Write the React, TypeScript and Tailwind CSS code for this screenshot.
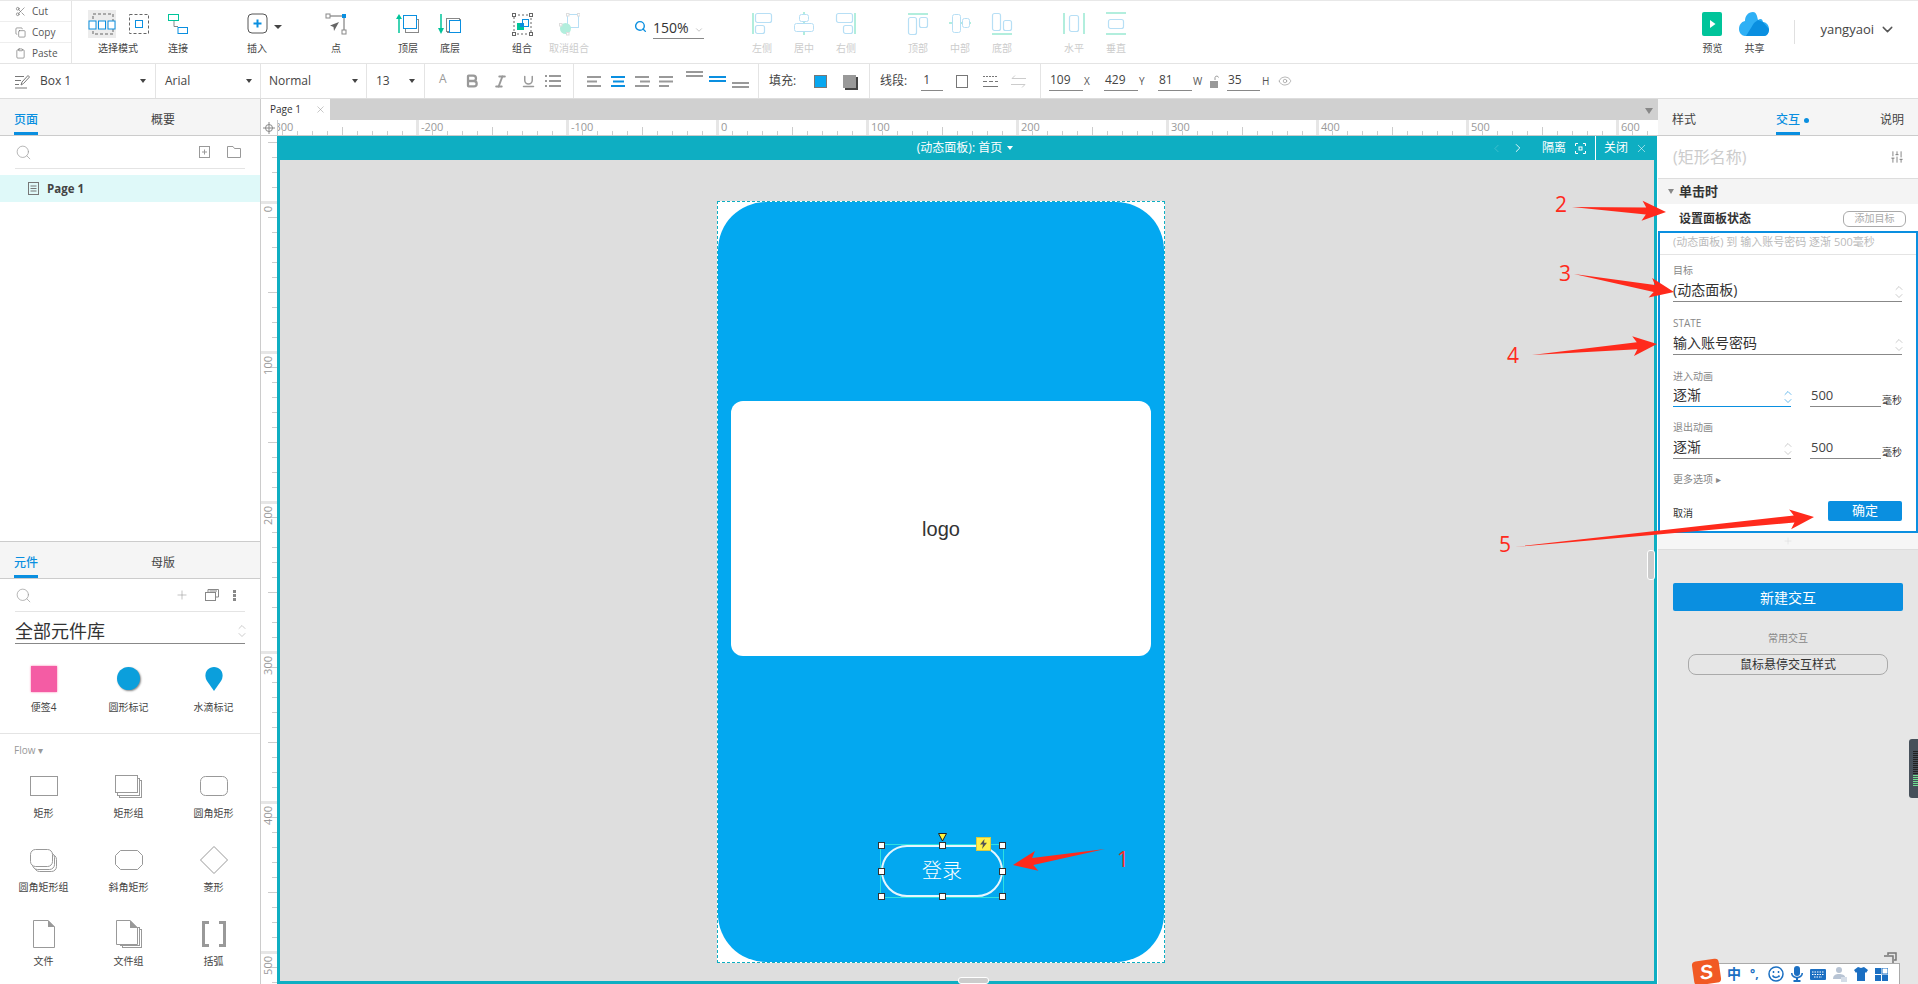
import React from "react";
import { Bold, ChevronDown, ChevronUp, ChevronLeft, ChevronRight, Clipboard, Copy, Eye, Italic, Plus, Scissors, Search, SlidersVertical, Underline, X } from "lucide-react";

const BLUE = "#0a8fe0";
const GREEN = "#00c49a";
const DARK = "#666";
const L_BLUE = "#b7dff5";
const L_GREEN = "#b2eedd";

// --- toolbar icons ---
function SelectAllIcon() {
  return (
    <svg width="28" height="28" viewBox="0 0 28 28" className="bg-[#ececec]">
      <rect x="5" y="4" width="20" height="20" fill="none" stroke={DARK} strokeDasharray="3 2" />
      <rect x="1" y="11" width="7" height="8" fill="#fff" stroke={BLUE} />
      <rect x="10.500" y="11" width="7" height="8" fill="#fff" stroke={BLUE} />
      <rect x="20" y="11" width="7" height="8" fill="#fff" stroke={BLUE} />
    </svg>
  );
}
function SelectOneIcon() {
  return (
    <svg width="20" height="20" viewBox="0 0 20 20">
      <rect x="0.500" y="0.500" width="19" height="19" fill="none" stroke={DARK} strokeDasharray="3 2" />
      <rect x="6.500" y="6.500" width="7" height="7" fill="#fff" stroke={BLUE} />
    </svg>
  );
}
function ConnectIcon() {
  return (
    <svg width="20" height="22" viewBox="0 0 20 22">
      <path d="M6 7V13.500H10" fill="none" stroke="#888" />
      <rect x="0.500" y="1.500" width="10" height="6" fill="#fff" stroke={GREEN} />
      <rect x="10" y="14.500" width="9.500" height="6" fill="#fff" stroke={BLUE} />
    </svg>
  );
}
function InsertIcon() {
  return (
    <svg width="36" height="22" viewBox="0 0 36 22">
      <rect x="1" y="1" width="19" height="19" rx="4" fill="none" stroke="#555" />
      <path d="M10.500 6.500V14.500M6.500 10.500H14.500" stroke={BLUE} strokeWidth="2" />
      <path d="M27 12H35L31 16Z" fill="#444" />
    </svg>
  );
}
function PointIcon() {
  return (
    <svg width="22" height="22" viewBox="0 0 22 22">
      <path d="M3 3H19V19" fill="none" stroke="#666" />
      <rect x="1" y="1" width="4" height="4" fill="#fff" stroke="#888" />
      <rect x="17" y="1" width="4" height="4" fill={BLUE} />
      <rect x="17" y="17" width="4" height="4" fill="#fff" stroke="#888" />
      <path d="M14 9L5 12.500L8.500 14L9 18Z" fill="#666" />
    </svg>
  );
}
function LayerIcon({ up }: { up: boolean }) {
  return (
    <svg width="24" height="22" viewBox="0 0 24 22">
      <rect x="9.500" y="6.500" width="13" height="13" fill="none" stroke="#888" />
      <rect x={up ? 7.5 : 8.5} y={up ? 2.5 : 5.5} width="13" height="13" fill="#fff" stroke={up ? BLUE : "#888"} />
      {!up && <rect x="11.500" y="7.500" width="11" height="12" fill="#fff" stroke={BLUE} />}
      <path d={up ? "M3 20V5" : "M3 1V16"} stroke={GREEN} strokeWidth="1.500" />
      <path d={up ? "M3 1L6 6H0Z" : "M3 21L6 15H0Z"} fill={GREEN} />
    </svg>
  );
}
function GroupIcon() {
  return (
    <svg width="21" height="23" viewBox="0 0 21 23">
      <rect x="2" y="2" width="17" height="19" fill="none" stroke="#666" strokeDasharray="2 2" />
      {[[0, 0], [17, 0], [0, 19], [17, 19]].map(([x, y]) => (
        <rect key={`${x}-${y}`} x={x + 0.5} y={y + 0.5} width="3" height="3" fill="#fff" stroke="#666" />
      ))}
      <rect x="10.500" y="6.500" width="6" height="7" fill="#fff" stroke={BLUE} />
      <rect x="5" y="10" width="7" height="7" fill={GREEN} />
      <rect x="8" y="10" width="4" height="4" fill={BLUE} />
    </svg>
  );
}
function UngroupIcon() {
  return (
    <svg width="21" height="23" viewBox="0 0 21 23">
      <rect x="8.500" y="1.500" width="11" height="13" fill="none" stroke={L_BLUE} />
      <circle cx="6.500" cy="15.500" r="5.500" fill={L_GREEN} />
      {[[7, 0], [18, 0], [0, 10], [7, 19]].map(([x, y]) => (
        <rect key={`${x}-${y}`} x={x + 0.5} y={y + 0.5} width="2.500" height="2.500" fill="#fff" stroke="#ddd" />
      ))}
    </svg>
  );
}
function AlignIcon({ type }: { type: string }) {
  const box = { fill: "none", stroke: L_BLUE, strokeWidth: 1.2 };
  const bar = { fill: L_GREEN };
  return (
    <svg width="22" height="24" viewBox="0 0 22 24">
      {type === "left" && (<><rect x="1" y="1" width="2" height="21" {...bar} /><rect x="4.500" y="1.500" width="16" height="9" rx="2" {...box} /><rect x="4.500" y="13.500" width="9" height="8" rx="2" {...box} /></>)}
      {type === "center" && (<><rect x="10" y="0" width="2" height="23" {...bar} /><rect x="6.500" y="2.500" width="9" height="7" rx="2" fill="#fff" stroke={L_BLUE} /><rect x="1.500" y="11.500" width="19" height="8" rx="2" fill="#fff" stroke={L_BLUE} /></>)}
      {type === "right" && (<><rect x="19" y="1" width="2" height="21" {...bar} /><rect x="1.500" y="1.500" width="16" height="9" rx="2" {...box} /><rect x="8.500" y="13.500" width="9" height="8" rx="2" {...box} /></>)}
      {type === "top" && (<><rect x="1" y="1" width="20" height="2" {...bar} /><rect x="1.500" y="5.500" width="8" height="17" rx="2" {...box} /><rect x="12.500" y="5.500" width="8" height="10" rx="2" {...box} /></>)}
      {type === "middle" && (<><rect x="0" y="10" width="22" height="2" {...bar} /><rect x="3.500" y="2.500" width="8" height="18" rx="2" fill="#fff" stroke={L_BLUE} /><rect x="13.500" y="6.500" width="7" height="9" rx="2" fill="#fff" stroke={L_BLUE} /></>)}
      {type === "bottom" && (<><rect x="1" y="21" width="20" height="2" {...bar} /><rect x="1.500" y="1.500" width="8" height="17" rx="2" {...box} /><rect x="12.500" y="8.500" width="8" height="10" rx="2" {...box} /></>)}
      {type === "horizontal" && (<><rect x="0" y="1" width="2" height="21" {...bar} /><rect x="20" y="1" width="2" height="21" {...bar} /><rect x="6.500" y="3.500" width="9" height="16" rx="2" {...box} /></>)}
      {type === "vertical" && (<><rect x="1" y="0" width="20" height="2" {...bar} /><rect x="1" y="21" width="20" height="2" {...bar} /><rect x="3.500" y="7.500" width="15" height="9" rx="2" {...box} /></>)}
    </svg>
  );
}
function PreviewIcon() {
  return (
    <svg width="20" height="24" viewBox="0 0 20 24">
      <rect width="20" height="24" rx="2" fill={GREEN} />
      <path d="M8 8L13.500 12L8 16Z" fill="#fff" />
    </svg>
  );
}
function CloudIcon() {
  return (
    <svg width="30" height="24" viewBox="0 0 30 24">
      <path d="M14 0C9 0 6 4 6 9C2 10 0 13 0 17C0 21 3 24 6 24H25C28 24 30 21 30 17C30 13 27 10 24 10C23 6 21 7 19 8C18 3 17 0 14 0Z" fill="#2fb0f5" />
      <path d="M7 24L15 11L19 8L24 10L30 17C30 21 28 24 25 24Z" fill="#0a8fe0" />
    </svg>
  );
}
function Caret({ className = "" }: { className?: string }) {
  return <span className={`block w-0 h-0 border-x-[3.5px] border-x-transparent border-t-[4px] border-t-[#444] ${className}`} />;
}
function UpDown({ color = "#aaa" }: { color?: string }) {
  return (
    <span className="flex flex-col items-center shrink-0 -mr-[3px] -space-y-[4px]" style={{ color }}>
      <ChevronUp size={12} strokeWidth={1.2} />
      <ChevronDown size={12} strokeWidth={1.2} />
    </span>
  );
}

function ToolItem({ label, className = "", disabled = false, children }: { label: string; className?: string; disabled?: boolean; children: React.ReactNode }) {
  return (
    <div className={`w-[42px] shrink-0 flex flex-col items-center pt-[11px] ${className}`}>
      <div className="h-[24px] flex items-center justify-center">{children}</div>
      <div className={`mt-[4px] text-[10px] leading-[16px] whitespace-nowrap ${disabled ? "text-[#ccc]" : "text-[#444]"}`}>{label}</div>
    </div>
  );
}

function TopToolbar() {
  return (
    <div className="h-[64px] flex border-b border-[#e4e4e4] border-t border-t-[#e8e8e8] bg-white">
      <div className="w-[72px] shrink-0 border-r border-[#e4e4e4] text-[10px] text-[#555]">
        {[
          { label: "Cut", Icon: Scissors },
          { label: "Copy", Icon: Copy },
          { label: "Paste", Icon: Clipboard },
        ].map(({ label, Icon }) => (
          <div key={label} className="h-[21px] flex items-center gap-[6px] pl-[15px] border-b border-[#eee] last:border-b-0">
            <Icon size={11} strokeWidth={1.2} />
            <span>{label}</span>
          </div>
        ))}
      </div>
      <div className="w-[74px] ml-[9px] shrink-0 flex flex-col items-center pt-[9px]">
        <div className="h-[28px] flex items-center gap-[13px]">
          <SelectAllIcon />
          <SelectOneIcon />
        </div>
        <div className="mt-[2px] text-[10px] leading-[16px] text-[#444]">选择模式</div>
      </div>
      <ToolItem label="连接" className="ml-[2px]"><ConnectIcon /></ToolItem>
      <ToolItem label="插入" className="ml-[37px]"><span className="pl-[16px]"><InsertIcon /></span></ToolItem>
      <ToolItem label="点" className="ml-[37px]"><PointIcon /></ToolItem>
      <ToolItem label="顶层" className="ml-[30px]"><LayerIcon up /></ToolItem>
      <ToolItem label="底层"><LayerIcon up={false} /></ToolItem>
      <ToolItem label="组合" className="ml-[30px]"><GroupIcon /></ToolItem>
      <ToolItem label="取消组合" className="ml-[5px]" disabled><UngroupIcon /></ToolItem>
      <div className="w-[70px] ml-[44px] shrink-0 flex items-start pt-[15px] text-[#0a8fe0]">
        <Search size={13} strokeWidth={2.6} className="mt-[4px] mr-[6px]" />
        <div className="w-[51px] h-[23px] border-b border-[#888] flex items-center text-[14px] text-[#333]">
          <span>150%</span>
          <ChevronDown size={10} className="ml-[5px] mt-[6px] text-[#bbb]" />
        </div>
      </div>
      <ToolItem label="左侧" className="ml-[37px]" disabled><AlignIcon type="left" /></ToolItem>
      <ToolItem label="居中" disabled><AlignIcon type="center" /></ToolItem>
      <ToolItem label="右侧" disabled><AlignIcon type="right" /></ToolItem>
      <ToolItem label="顶部" className="ml-[30px]" disabled><AlignIcon type="top" /></ToolItem>
      <ToolItem label="中部" disabled><AlignIcon type="middle" /></ToolItem>
      <ToolItem label="底部" disabled><AlignIcon type="bottom" /></ToolItem>
      <ToolItem label="水平" className="ml-[30px]" disabled><AlignIcon type="horizontal" /></ToolItem>
      <ToolItem label="垂直" disabled><AlignIcon type="vertical" /></ToolItem>
      <ToolItem label="预览" className="ml-auto"><PreviewIcon /></ToolItem>
      <ToolItem label="共享"><CloudIcon /></ToolItem>
      <div className="w-px h-[24px] mt-[19px] ml-[19px] bg-[#e0e0e0]" />
      <div className="ml-[25px] mr-[22px] flex items-start pt-[19px] text-[13px] text-[#444]">
        <span>yangyaoi</span>
        <ChevronDown size={17} className="ml-[5px] mt-[1px] text-[#555]" />
      </div>
    </div>
  );
}

function BarsIcon({ rows, color = "#999" }: { rows: number[]; color?: string }) {
  return (
    <svg width="15" height="13" viewBox="0 0 15 13" className="shrink-0">
      {rows.map((w, i) => (
        <rect key={i} x={w < 0 ? 15 + w : (15 - w) * (w === 11 ? 0.5 : 0)} y={i * 4.5 + 1} width={Math.abs(w)} height="2" fill={color} />
      ))}
    </svg>
  );
}
function DoubleBar({ blue = false, top }: { blue?: boolean; top: number }) {
  return (
    <svg width="17" height="24" viewBox="0 0 17 24" className="shrink-0">
      <rect y={top} width="17" height="2" fill={blue ? BLUE : "#999"} />
      <rect y={top + 4} width="17" height="2" fill={blue ? BLUE : "#999"} />
    </svg>
  );
}
function FieldBox({ value, className = "" }: { value: string; className?: string }) {
  return <div className={`h-[20px] border-b border-[#888] pl-[1px] text-[12px] leading-[18px] text-[#444] ${className}`}>{value}</div>;
}
function Select({ label, className }: { label: string; className: string }) {
  return (
    <div className={`shrink-0 h-full flex items-center justify-between border-r border-[#e4e4e4] text-[12px] text-[#444] ${className}`}>
      <span>{label}</span>
      <Caret />
    </div>
  );
}

function FormatBar() {
  return (
    <div className="h-[35px] flex border-b border-[#ddd] bg-white">
      <div className="w-[156px] shrink-0 flex items-center border-r border-[#e4e4e4] pl-[15px] pr-[9px] text-[12px] text-[#444]">
        <svg width="15" height="15" viewBox="0 0 15 15" fill="none" stroke="#777" className="mr-[10px]">
          <path d="M0 2.500H9M0 6.500H6M0 10.500H4M0 14H12M6 11L7 8L13 1.500L14.500 3L8.500 9.500Z" />
        </svg>
        <span>Box 1</span>
        <Caret className="ml-auto" />
      </div>
      <Select label="Arial" className="w-[105px] pl-[9px] pr-[8px]" />
      <Select label="Normal" className="w-[106px] pl-[8px] pr-[8px]" />
      <Select label="13" className="w-[58px] pl-[9px] pr-[9px]" />
      <div className="w-[149px] shrink-0 flex items-center border-r border-[#e4e4e4] pl-[14px] text-[#999]">
        <span className="w-[25px] text-[12px] leading-none -mt-[4px]">A</span>
        <Bold size={16} strokeWidth={3.4} className="mr-[13px]" />
        <Italic size={15} strokeWidth={3} className="mr-[13px]" />
        <Underline size={15} strokeWidth={2.4} className="mr-[9px]" />
        <svg width="16" height="12" viewBox="0 0 16 12" fill="#999">
          <path d="M0 0H2V2H0ZM4 0H16V2H4ZM0 5H2V7H0ZM4 5H16V7H4ZM0 10H2V12H0ZM4 10H16V12H4Z" />
        </svg>
      </div>
      <div className="w-[185px] shrink-0 flex items-center border-r border-[#e4e4e4] pl-[13px]">
        <div className="flex items-center gap-[9px]">
          <BarsIcon rows={[14, 10, 14]} />
          <BarsIcon rows={[14, 11, 14]} color={BLUE} />
          <BarsIcon rows={[14, -10, 14]} />
          <BarsIcon rows={[14, 14, 10]} />
        </div>
        <div className="ml-[12px] flex items-center gap-[6px]">
          <DoubleBar top={2} />
          <DoubleBar blue top={7} />
          <DoubleBar top={13} />
        </div>
      </div>
      <div className="w-[111px] shrink-0 flex items-center border-r border-[#e4e4e4] pl-[10px] text-[12px] text-[#444]">
        <span>填充:</span>
        <span className="ml-[18px] w-[13px] h-[13px] bg-[#07a7f0] border border-[#777]" />
        <span className="ml-[16px] w-[13px] h-[13px] bg-[#999] shadow-[2px_2px_0_#444]" />
      </div>
      <div className="w-[171px] shrink-0 flex items-center border-r border-[#e4e4e4] pl-[10px] text-[12px] text-[#444]">
        <span>线段:</span>
        <FieldBox value=" 1" className="ml-[14px] w-[22px] pl-[2px]" />
        <span className="ml-[13px] w-[12px] h-[13px] border border-[#777]" />
        <svg width="15" height="13" viewBox="0 0 15 13" className="ml-[15px]" stroke="#777">
          <path d="M0 1.500H15" strokeDasharray="2 1" />
          <path d="M0 6.500H15" strokeDasharray="4 2" />
          <path d="M0 11.500H15" />
        </svg>
        <svg width="15" height="13" viewBox="0 0 15 13" className="ml-[13px]" fill="none" stroke="#ccc">
          <path d="M15 3.500H1L4 0.500M0 9.500H14L11 12.500" />
        </svg>
      </div>
      <div className="flex items-center pl-[8px] text-[10px] text-[#555]">
        <FieldBox value="109" className="w-[34px]" />
        <span className="ml-[1px] w-[20px]">X</span>
        <FieldBox value="429" className="w-[34px]" />
        <span className="ml-[1px] w-[19px]">Y</span>
        <FieldBox value="81" className="w-[34px]" />
        <span className="ml-[1px] w-[17px]">W</span>
        <svg width="9" height="13" viewBox="0 0 9 13" className="shrink-0">
          <path d="M5 5V2.500A1.800 1.800 0 0 1 8.500 2.500" fill="none" stroke="#999" />
          <rect y="6" width="8" height="7" fill="#999" />
        </svg>
        <FieldBox value="35" className="ml-[8px] w-[33px]" />
        <span className="ml-[2px] w-[16px]">H</span>
        <Eye size={14} strokeWidth={1} className="text-[#888]" />
      </div>
    </div>
  );
}

// --- left panel ---
function PanelTabs({ first, second }: { first: string; second: string }) {
  return (
    <div className="h-[37px] shrink-0 flex items-end pl-[14px] bg-[#f5f5f5] border-b border-[#ccc] text-[12px]">
      <div className="w-[137px] h-full flex items-end">
        <span className="w-[24px] pb-[1px] leading-[22px] font-medium text-[#0a8fe0] border-b-[3px] border-[#0a8fe0] text-center whitespace-nowrap">{first}</span>
      </div>
      <span className="pb-[4px] leading-[22px] text-[#444]">{second}</span>
    </div>
  );
}

const shapeRows = [
  ["矩形", "矩形组", "圆角矩形"],
  ["圆角矩形组", "斜角矩形", "菱形"],
  ["文件", "文件组", "括弧"],
];

function ShapeIcon({ name }: { name: string }) {
  const s = { fill: "#fff", stroke: "#999" };
  return (
    <svg width="30" height="30" viewBox="0 0 30 30" className="shrink-0">
      {name === "矩形" && <rect x="1.500" y="5.500" width="27" height="19" {...s} />}
      {name === "矩形组" && (<><rect x="5.500" y="9.500" width="22" height="17" {...s} /><rect x="3.500" y="7.500" width="22" height="17" {...s} /><rect x="1.500" y="4.500" width="22" height="17" {...s} /></>)}
      {name === "圆角矩形" && <rect x="1.500" y="5.500" width="27" height="19" rx="5" {...s} />}
      {name === "圆角矩形组" && (<><rect x="5.500" y="9.500" width="22" height="17" rx="5" {...s} /><rect x="3.500" y="7.500" width="22" height="17" rx="5" {...s} /><rect x="1.500" y="4.500" width="22" height="17" rx="5" {...s} /></>)}
      {name === "斜角矩形" && <path d="M6.500 5.500H23.500L28.500 10.500V19.500L23.500 24.500H6.500L1.500 19.500V10.500Z" {...s} />}
      {name === "菱形" && <path d="M15 1.500L28.500 15L15 28.500L1.500 15Z" {...s} />}
      {name === "文件" && (<><path d="M4.500 1.500H19L25.500 8V28.500H4.500Z" {...s} /><path d="M19 1L26 8H19Z" fill="#999" /></>)}
      {name === "文件组" && (<><rect x="8.500" y="10.500" width="19" height="18" {...s} /><rect x="6.500" y="8.500" width="19" height="18" {...s} /><path d="M2.500 1.500H16L23.500 9V25.500H2.500Z" {...s} /><path d="M16 1L24 9H16Z" fill="#999" /></>)}
      {name === "括弧" && <path d="M10 2H3V28H10V25H6V5H10ZM20 2H27V28H20V25H24V5H20Z" fill="#999" />}
    </svg>
  );
}

function LeftPanel() {
  return (
    <div className="w-[261px] shrink-0 flex flex-col border-r border-[#ccc] bg-white">
      <PanelTabs first="页面" second="概要" />
      <div className="h-[33px] mx-[15px] flex items-center border-b border-[#e4e4e4] text-[#999]">
        <Search size={17} strokeWidth={1} />
        <svg width="11" height="12" viewBox="0 0 11 12" className="ml-auto" fill="none" stroke="#999">
          <rect x="0.500" y="0.500" width="10" height="11" />
          <path d="M5.500 3.500V8.500M3 6H8" />
        </svg>
        <svg width="14" height="12" viewBox="0 0 14 12" className="ml-[17px] mr-[4px]" fill="none" stroke="#999">
          <path d="M0.500 11.500V0.500H6L7.500 2.500H13.500V11.500Z" />
        </svg>
      </div>
      <div className="h-[27px] mt-[6px] flex items-center pl-[28px] bg-[#dff9f9] text-[11.500px] font-bold text-[#444]">
        <svg width="11" height="13" viewBox="0 0 11 13" fill="none" stroke="#777" className="mr-[8px]">
          <rect x="0.500" y="0.500" width="10" height="12" />
          <path d="M2.500 4H8.500M2.500 6.500H8.500M2.500 9H8.500" />
        </svg>
        <span>Page 1</span>
      </div>
      <div className="h-[339px] shrink-0" />
      <div className="flex-1 border-t border-[#ccc] flex flex-col overflow-hidden">
        <PanelTabs first="元件" second="母版" />
        <div className="h-[33px] shrink-0 mx-[15px] flex items-center border-b border-[#e4e4e4] text-[#999]">
          <Search size={17} strokeWidth={1} />
          <Plus size={14} strokeWidth={1} className="ml-auto" />
          <svg width="14" height="12" viewBox="0 0 14 12" className="ml-[16px]" fill="none" stroke="#888">
            <rect x="0.500" y="3.500" width="10" height="8" />
            <path d="M3 3V0.500H13.500V8H11M4.500 2H12" />
          </svg>
          <svg width="3" height="11" viewBox="0 0 3 11" className="ml-[14px] mr-[9px]" fill="#888">
            <rect width="3" height="3" /><rect y="4" width="3" height="3" /><rect y="8" width="3" height="3" />
          </svg>
        </div>
        <div className="mx-[15px] mt-[7px] h-[25px] shrink-0 border-b border-[#888] flex items-center justify-between text-[18px] text-[#333]">
          <span>全部元件库</span>
          <UpDown />
        </div>
        <div className="h-[90px] shrink-0 grid grid-cols-3 border-b border-[#e4e4e4] pt-[22px] pl-[1px] pr-[4px] text-[10px] text-[#444]">
          <div className="flex flex-col items-center">
            <span className="w-[26px] h-[26px] bg-[#f45ca4] shadow-[0_0_2px_#f7a]" />
            <span className="mt-[8px]">便签4</span>
          </div>
          <div className="flex flex-col items-center">
            <span className="w-[23px] h-[23px] mt-[1px] mb-[2px] rounded-full bg-[#0b9fdc] shadow-[1px_1px_2px_#888]" />
            <span className="mt-[8px]">圆形标记</span>
          </div>
          <div className="flex flex-col items-center">
            <svg width="20" height="26" viewBox="0 0 20 26"><path d="M10 25L3 15C-1 8 3 1 10 1S21 8 17 15Z" fill="#0b9fdc" /></svg>
            <span className="mt-[8px]">水滴标记</span>
          </div>
        </div>
        <div className="mt-[9px] ml-[14px] text-[10px] leading-[14px] text-[#999]">Flow ▾</div>
        <div className="mt-[14px] grid grid-cols-3 gap-y-[25px] pr-[4px] pl-[1px] text-[10px] leading-[14px] text-[#444]">
          {shapeRows.flat().map((name) => (
            <div key={name} className="flex flex-col items-center">
              <ShapeIcon name={name} />
              <span className="mt-[5px] whitespace-nowrap">{name}</span>
            </div>
          ))}
        </div>
      </div>
    </div>
  );
}

// --- rulers ---
function RulerX() {
  const ticks = Array.from({ length: 94 }, (_, i) => 6 + i * 15);
  const majors = [-300, -200, -100, 0, 100, 200, 300, 400, 500, 600];
  return (
    <svg width="1397" height="16" className="block">
      <rect width="1397" height="16" fill="#fff" />
      {ticks.map((x) => (
        <rect key={x} x={x} y={(x - 6) % 75 === 0 ? 7 : 11} width="1" height={(x - 6) % 75 === 0 ? 8 : 4} fill="#ccc" />
      ))}
      {majors.map((m) => {
        const x = 456 + m * 1.5;
        return (
          <g key={m}>
            <rect x={x - 1} width="3" height="15" fill="#e6e6e6" />
            <text x={x + 4} y="11" fontSize="11" fill="#999">{m}</text>
          </g>
        );
      })}
      <rect width="16" height="16" fill="#fff" />
      <rect x="16" width="1" height="16" fill="#ccc" />
      <circle cx="8" cy="8" r="3.500" fill="none" stroke="#888" />
      <path d="M8 2V14M2 8H14" stroke="#888" />
      <rect y="15" width="1397" height="1" fill="#ccc" />
    </svg>
  );
}

function RulerY() {
  const ticks = Array.from({ length: 58 }, (_, i) => 6 + i * 15);
  const majors = [0, 100, 200, 300, 400, 500];
  return (
    <svg width="16" height="848" className="block shrink-0">
      <rect width="16" height="848" fill="#fff" />
      {ticks.map((y) => (
        <rect key={y} x={(y - 6) % 75 === 0 ? 7 : 11} y={y} width={(y - 6) % 75 === 0 ? 9 : 5} height="1" fill="#ccc" />
      ))}
      {majors.map((m) => {
        const y = 66 + m * 1.5;
        return (
          <g key={m}>
            <rect y={y - 1} width="16" height="3" fill="#e6e6e6" />
            <text x="0" y="0" fontSize="11" fill="#999" textAnchor="end" transform={`translate(11 ${y + 4}) rotate(-90)`}>{m}</text>
          </g>
        );
      })}
    </svg>
  );
}

// --- canvas ---
function Handle({ className }: { className: string }) {
  return <span className={`absolute w-[7px] h-[7px] bg-white border border-[#333] ${className}`} />;
}

function LoginButton() {
  return (
    <div className="relative w-[122px] h-[52px] ml-[163px] mt-[189px] outline outline-1 outline-[#2de0e0]">
      <div className="w-full h-full rounded-[26px] border-2 border-white/90 flex items-center justify-center text-[20px] font-light text-white">登录</div>
      <Handle className="-left-[3px] -top-[3px]" />
      <Handle className="left-[58px] -top-[3px]" />
      <Handle className="-right-[3px] -top-[3px]" />
      <Handle className="-left-[3px] top-[23px]" />
      <Handle className="-right-[3px] top-[23px]" />
      <Handle className="-left-[3px] -bottom-[3px]" />
      <Handle className="left-[58px] -bottom-[3px]" />
      <Handle className="-right-[3px] -bottom-[3px]" />
      <svg width="9" height="9" viewBox="0 0 9 9" className="absolute left-[57px] -top-[12px]">
        <path d="M0.500 0.500H8.500L4.500 8Z" fill="#fff23b" stroke="#222" />
      </svg>
      <span className="absolute left-[95px] -top-[8px] w-[15px] h-[14px] bg-[#fff04a] border border-[#d8c840] flex items-center justify-center">
        <svg width="7" height="10" viewBox="0 0 7 10"><path d="M4.500 0L0 5.500H3L2 10L7 3.800H4Z" fill="#555" /></svg>
      </span>
    </div>
  );
}

function Canvas() {
  return (
    <div className="w-[1380px] h-[848px] flex flex-col border-x-[3px] border-b-[3px] border-[#0eaec2] bg-[#dedede]">
      <div className="h-[24px] shrink-0 -mx-[3px] relative flex items-center justify-center bg-[#0eaec2] text-[12px] text-white">
        <span className="-ml-[4px]">(动态面板): 首页</span>
        <span className="ml-[5px] w-0 h-0 border-x-[3.5px] border-x-transparent border-t-[4px] border-t-white" />
        <div className="absolute right-0 top-0 h-full flex items-center">
          <ChevronLeft size={13} strokeWidth={1.2} className="text-white/30" />
          <ChevronRight size={14} strokeWidth={1.5} className="ml-[8px]" />
          <span className="ml-[17px]">隔离</span>
          <svg width="11" height="11" viewBox="0 0 11 11" fill="none" stroke="#fff" className="ml-[9px]">
            <path d="M3 0.500H0.500V3M8 0.500H10.500V3M3 10.500H0.500V8M8 10.500H10.500V8" />
            <rect x="4" y="4" width="3" height="3" />
          </svg>
          <span className="ml-[9px] w-px h-full bg-white" />
          <span className="ml-[8px]">关闭</span>
          <X size={13} strokeWidth={1} className="ml-[7px] mr-[9px]" />
        </div>
      </div>
      <div className="ml-[437px] mt-[41px] w-[448px] h-[762px] border border-dashed border-[#0eaec2] bg-white">
        <div className="w-full h-full rounded-[48px] bg-[#03a8f0] flex flex-col">
          <div className="mt-[199px] mx-[13px] h-[255px] rounded-[12px] bg-white flex items-center justify-center font-['Liberation_Sans',sans-serif] text-[20px] text-[#333]">logo</div>
          <LoginButton />
        </div>
      </div>
    </div>
  );
}

function Center() {
  return (
    <div className="w-[1397px] shrink-0 flex flex-col relative">
      <div className="h-[21px] flex bg-[#d0d0d0]">
        <div className="w-[69px] bg-white flex items-center pl-[9px] text-[10px] text-[#333]">
          <span>Page 1</span>
          <X size={11} strokeWidth={1} className="ml-[14px] text-[#888]" />
        </div>
        <span className="ml-auto mr-[5px] mt-[9px] w-0 h-0 border-x-[4px] border-x-transparent border-t-[6px] border-t-[#888]" />
      </div>
      <RulerX />
      <div className="flex">
        <RulerY />
        <Canvas />
      </div>
      <span className="absolute right-[3px] top-[451px] w-[8px] h-[30px] rounded-[3px] bg-[#ccc] border border-white" />
      <span className="absolute left-[697px] bottom-[0px] w-[31px] h-[7px] rounded-[3px] bg-[#ccc] border border-white" />
    </div>
  );
}

// --- right panel ---
function FieldLabel({ children, className = "" }: { children: React.ReactNode; className?: string }) {
  return <div className={`text-[10px] leading-[14px] text-[#888] ${className}`}>{children}</div>;
}
function FormSelect({ value, active = false, className = "" }: { value: string; active?: boolean; className?: string }) {
  return (
    <div className={`h-[20px] flex items-center justify-between text-[14px] leading-[20px] text-[#333] border-b ${active ? "border-[#0a8fe0]" : "border-[#888]"} ${className}`}>
      <span className="-mt-[3px]">{value}</span>
      <UpDown color={active ? BLUE : "#aaa"} />
    </div>
  );
}
function MsField() {
  return (
    <div className="ml-[19px] flex items-end">
      <div className="w-[71px] h-[20px] border-b border-[#888] pl-[1px] text-[13px] leading-[16px] text-[#444]">500</div>
      <span className="ml-[1px] text-[10px] leading-[14px] text-[#333] whitespace-nowrap">毫秒</span>
    </div>
  );
}

function RightPanel() {
  return (
    <div className="w-[260px] shrink-0 flex flex-col bg-[#e6e6e6]">
      <div className="h-[37px] shrink-0 flex items-end justify-between pl-[14px] pr-[14px] bg-[#f5f5f5] border-b border-[#ccc] text-[12px] text-[#444]">
        <span className="pb-[4px] leading-[22px]">样式</span>
        <span className="relative pb-[1px] leading-[22px] font-medium text-[#0a8fe0] border-b-[3px] border-[#0a8fe0]">
          交互
          <span className="absolute -right-[9px] top-[9px] w-[5px] h-[5px] rounded-full bg-[#0a8fe0]" />
        </span>
        <span className="pb-[4px] leading-[22px]">说明</span>
      </div>
      <div className="h-[43px] shrink-0 flex items-center justify-between pl-[15px] pr-[14px] bg-white border-b border-[#ddd] text-[#bbb]">
        <span className="text-[16px] text-[#ccc]">(矩形名称)</span>
        <SlidersVertical size={14} strokeWidth={1.5} className="text-[#777]" />
      </div>
      <div className="h-[25px] shrink-0 flex items-center pl-[10px] bg-[#f4f4f4] text-[13px] font-bold text-[#333]">
        <span className="w-0 h-0 mr-[5px] border-x-[3px] border-x-transparent border-t-[5px] border-t-[#888]" />
        单击时
      </div>
      <div className="h-[27px] shrink-0 flex items-center justify-between pt-[2px] pl-[21px] pr-[12px] bg-white text-[12px] font-bold text-[#333]">
        <span>设置面板状态</span>
        <span className="w-[63px] h-[16px] rounded-[6px] border border-[#aaa] flex items-center justify-center text-[10px] font-normal text-[#aaa]">添加目标</span>
      </div>
      <div className="h-[302px] shrink-0 bg-white border-2 border-[#0a8fe0] flex flex-col">
        <div className="h-[22px] shrink-0 pl-[13px] border-b border-[#e4e4e4] text-[11px] leading-[17px] text-[#bbb] whitespace-nowrap">(动态面板) 到 输入账号密码 逐渐 500毫秒</div>
        <div className="flex flex-col pl-[13px] pr-[14px]">
          <FieldLabel className="mt-[8px]">目标</FieldLabel>
          <FormSelect value="(动态面板)" className="mt-[5px]" />
          <FieldLabel className="mt-[14px]">STATE</FieldLabel>
          <FormSelect value="输入账号密码" className="mt-[5px]" />
          <FieldLabel className="mt-[14px]">进入动画</FieldLabel>
          <div className="mt-[4px] flex">
            <FormSelect value="逐渐" active className="w-[119px]" />
            <MsField />
          </div>
          <FieldLabel className="mt-[13px]">退出动画</FieldLabel>
          <div className="mt-[5px] flex">
            <FormSelect value="逐渐" className="w-[119px]" />
            <MsField />
          </div>
          <FieldLabel className="mt-[13px]">更多选项 ▸</FieldLabel>
          <div className="mt-[15px] flex items-center justify-between">
            <span className="mt-[5px] text-[10px] text-[#333]">取消</span>
            <span className="w-[74px] h-[20px] rounded-[2px] bg-[#0a8fe0] flex items-center justify-center text-[13px] text-white">确定</span>
          </div>
        </div>
      </div>
      <div className="h-[17px] shrink-0 flex items-center justify-center bg-[#f6f6f6] border-b border-[#ddd] text-[#ddd]">
        <Plus size={10} strokeWidth={1.5} />
      </div>
      <div className="mt-[33px] mx-[15px] h-[28px] rounded-[2px] bg-[#0a8fe0] flex items-center justify-center text-[14px] text-white">新建交互</div>
      <div className="mt-[20px] text-center text-[10px] leading-[14px] text-[#888]">常用交互</div>
      <div className="mt-[9px] mx-[30px] h-[21px] rounded-[8px] border border-[#aaa] flex items-center justify-center text-[12px] text-[#333]">鼠标悬停交互样式</div>
    </div>
  );
}

// --- annotations laid over the screenshot ---
function arrowPoints(x1: number, y1: number, x2: number, y2: number, head = 24, barb = 10, neck = 3.5) {
  const len = Math.hypot(x2 - x1, y2 - y1);
  const ux = (x2 - x1) / len;
  const uy = (y2 - y1) / len;
  const at = (d: number, w: number) => `${x1 + ux * d - uy * w},${y1 + uy * d + ux * w}`;
  return [at(0, 0), at(len - head + 4, neck), at(len - head, barb), at(len, 0), at(len - head, -barb), at(len - head + 4, -neck)].join(" ");
}

const arrows = [
  [1105, 849, 1013, 865],
  [1572, 207, 1666, 212],
  [1574, 274, 1674, 292],
  [1532, 355, 1657, 344],
  [1514, 547, 1814, 517],
];

const notes = [
  { n: "1", className: "left-[1117px] top-[845px]" },
  { n: "2", className: "left-[1555px] top-[190px]" },
  { n: "3", className: "left-[1559px] top-[259px]" },
  { n: "4", className: "left-[1507px] top-[341px]" },
  { n: "5", className: "left-[1499px] top-[530px]" },
];

function Annotations() {
  return (
    <>
      <svg width="1918" height="984" className="absolute left-0 top-0 pointer-events-none">
        {arrows.map(([x1, y1, x2, y2]) => (
          <polygon key={x1} points={arrowPoints(x1, y1, x2, y2)} fill="#ff2a1c" />
        ))}
      </svg>
      {notes.map(({ n, className }) => (
        <span key={n} className={`absolute text-[21px] leading-[28px] text-[#ff2a1c] ${className}`}>{n}</span>
      ))}
    </>
  );
}

function ImeBar() {
  return (
    <>
      <span className="absolute right-[0px] top-[739px] w-[9px] h-[59px] rounded-l-[3px] bg-[#46505a] flex flex-col justify-center gap-[1px] pl-[4px]">
        {Array.from({ length: 18 }, (_, i) => (
          <span key={i} className={`block w-[5px] h-[1px] ${i > 11 ? "bg-[#6fe08f]" : "bg-[#222]"}`} />
        ))}
      </span>
      <svg width="14" height="13" viewBox="0 0 14 13" className="absolute left-[1883px] top-[952px]" fill="none" stroke="#777" strokeWidth="1.500">
        <path d="M5 3V1H13V8H11M1 4H10V12" />
      </svg>
      <div className="absolute left-[1700px] top-[963px] w-[200px] h-[21px] bg-white border border-[#aaa] border-b-0 flex items-center pl-[26px] text-[#1b6fc2]">
        <span className="text-[14px] font-bold leading-none">中</span>
        <span className="ml-[9px] text-[12px] font-bold leading-none">°,</span>
        <svg width="16" height="16" viewBox="0 0 16 16" className="ml-[9px]" fill="none" stroke="#1b6fc2" strokeWidth="1.500">
          <circle cx="8" cy="8" r="7" /><path d="M4.500 9.500C6 12 10 12 11.500 9.500M5.500 5V7M10.500 5V7" />
        </svg>
        <svg width="12" height="16" viewBox="0 0 12 16" className="ml-[7px]" fill="#1b6fc2">
          <rect x="3" width="6" height="10" rx="3" /><path d="M0 7H1.500C1.500 12 10.500 12 10.500 7H12C12 10.500 9 12 7 12.300V14H9.500V16H2.500V14H5V12.300C3 12 0 10.500 0 7Z" />
        </svg>
        <svg width="16" height="11" viewBox="0 0 16 11" className="ml-[7px]">
          <rect width="16" height="11" rx="1" fill="#1b6fc2" />
          <path d="M2 3H14M2 5.500H14M4 8H12" stroke="#fff" strokeDasharray="1.500 1" />
        </svg>
        <svg width="14" height="15" viewBox="0 0 14 15" className="ml-[7px]" fill="#b8c4d4">
          <circle cx="6" cy="3" r="3" /><path d="M0 12C0 8 3 7 6 7S12 8 12 10V12Z" /><rect x="8" y="10" width="6" height="5" fill="#d5dde8" />
        </svg>
        <svg width="14" height="14" viewBox="0 0 14 14" className="ml-[7px]" fill="#1b6fc2">
          <path d="M4 0L7 1L10 0L14 3L12 6L11 5V14H3V5L2 6L0 3Z" />
        </svg>
        <svg width="13" height="13" viewBox="0 0 13 13" className="ml-[7px]" fill="#1b6fc2">
          <rect width="6" height="6" /><rect x="7" width="6" height="6" fill="none" stroke="#1b6fc2" /><rect y="7" width="6" height="6" /><rect x="7" y="7" width="6" height="6" />
        </svg>
      </div>
      <span className="absolute left-[1693px] top-[960px] w-[27px] h-[24px] rounded-[4px] -rotate-[8deg] bg-[#f15a24] flex items-center justify-center font-['Liberation_Sans',sans-serif] text-[20px] font-bold italic leading-none text-white">S</span>
    </>
  );
}

export default function App() {
  return (
    <div className="relative w-[1918px] h-[984px] overflow-hidden bg-white font-['Open_Sans','Noto_Sans_CJK_SC',sans-serif]">
      <TopToolbar />
      <FormatBar />
      <div className="flex h-[885px]">
        <LeftPanel />
        <Center />
        <RightPanel />
      </div>
      <Annotations />
      <ImeBar />
    </div>
  );
}
